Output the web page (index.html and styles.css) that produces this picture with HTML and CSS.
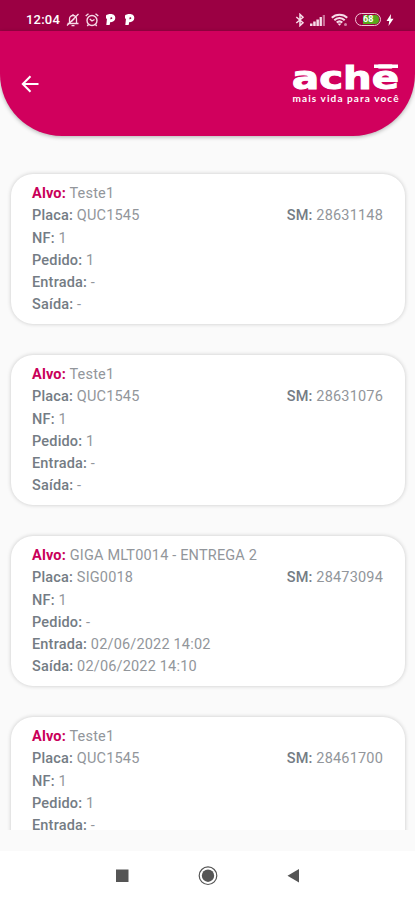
FILE: index.html
```html
<!DOCTYPE html>
<html lang="pt-BR">
<head>
    <meta charset="UTF-8">
    <meta name="viewport" content="width=device-width, initial-scale=1.0">
    <title>Aché</title>
    <link rel="stylesheet" href="styles.css">
</head>
<body>
    <div class="status-bar">
        <div class="status-left">
            <span class="clock">12:04</span>
            <svg class="icon-bell" width="14" height="14" viewBox="0 0 14 14" fill="none" stroke="currentColor" stroke-width="1.3">
                <path d="M1.500 10.500h11M3.500 10.500V6a3.500 3.500 0 0 1 7 0v4.500M5.500 12.700h3M7 1v1.500M1 12.500L12.500 1M5.500 8.500l3-3"/>
            </svg>
            <svg class="icon-alarm" width="14" height="14" viewBox="0 0 14 14" fill="none" stroke="currentColor" stroke-width="1.4">
                <circle cx="7" cy="7.500" r="5"/>
                <path d="M.7 3L3.500.8M13.300 3L10.500.8M4.800 6L7 8l2.500-1.500M3.500 11.500L2.300 13M10.500 11.500L11.700 13"/>
            </svg>
            <svg class="icon-p" width="11" height="13" viewBox="0 0 11 13">
                <path fill="currentColor" fill-rule="evenodd" d="M1 2.500C3 .6 10.300 0 10.300 5c0 3-2.600 4.400-5 4.100L4.600 12H1.300L2 5.500 1 5.800zM5.700 4.300L5.300 6.200c1.600.2 2-.6 2-1.200 0-.8-.8-1-1.600-.7z"/>
            </svg>
            <svg class="icon-p" width="11" height="13" viewBox="0 0 11 13">
                <path fill="currentColor" fill-rule="evenodd" d="M1 2.500C3 .6 10.300 0 10.300 5c0 3-2.600 4.400-5 4.100L4.600 12H1.300L2 5.500 1 5.800zM5.700 4.300L5.300 6.200c1.600.2 2-.6 2-1.200 0-.8-.8-1-1.600-.7z"/>
            </svg>
        </div>
        <div class="status-right">
            <svg width="10" height="14" viewBox="0 0 10 14" fill="none" stroke="currentColor" stroke-width="1.5">
                <path d="M1.300 4L8 9.800 5 12.600V1.400L8 4.200 1.300 10"/>
            </svg>
            <svg width="16" height="12" viewBox="0 0 16 12" fill="currentColor">
                <path d="M0 9.500h2.500V12H0zM3.200 7.500h2.500V12H3.200zM6.400 5.500h2.500V12H6.400zM9.600 3h2.300v9H9.600z"/>
                <path opacity=".5" d="M12.700 1H15v11h-2.300z"/>
            </svg>
            <svg class="icon-wifi" width="17" height="14" viewBox="0 0 17 14" fill="none" stroke="currentColor" stroke-width="2">
                <path d="M.8 4.800c4-4.200 11.400-4.200 15.400 0M3.300 7.300c3-3 7.400-3 10.400 0M5.700 9.600c1.800-1.600 3.800-1.600 5.600 0"/>
                <path fill="currentColor" stroke="none" d="M6.500 10.500h4l-2 2.200z"/>
                <circle cx="14.500" cy="11.500" r="1.500" fill="currentColor" stroke="none" opacity=".6"/>
            </svg>
            <span class="battery"><span class="battery-level">68</span></span>
            <svg class="icon-bolt" width="8" height="12" viewBox="0 0 8 12">
                <path fill="currentColor" d="M5 0L.5 7h2.700L2.500 12 7.500 4.800H4.700z"/>
            </svg>
        </div>
    </div>

    <header class="header">
        <svg class="back" width="18" height="18" viewBox="0 0 18 18" fill="none" stroke="currentColor" stroke-width="2">
            <path d="M17.500 9H2M9.500 1.300L1.800 9l7.700 7.700"/>
        </svg>
        <svg class="logo" width="108" height="44" viewBox="0 0 108 44" fill="currentColor">
            <text class="logo-name" x="0" y="27" textLength="107" lengthAdjust="spacingAndGlyphs">achē</text>
            <rect x="82" y="2.500" width="24" height="3.500"/>
            <text class="logo-tagline" x="0.500" y="40" textLength="106">mais vida para você</text>
        </svg>
    </header>

    <main class="list">
        <div class="card">
            <div class="row"><p class="alvo"><b>Alvo:</b> Teste1</p></div>
            <div class="row"><p><b>Placa:</b> QUC1545</p><p><b>SM:</b> 28631148</p></div>
            <div class="row"><p><b>NF:</b> 1</p></div>
            <div class="row"><p><b>Pedido:</b> 1</p></div>
            <div class="row"><p><b>Entrada:</b> -</p></div>
            <div class="row"><p><b>Saída:</b> -</p></div>
        </div>

        <div class="card">
            <div class="row"><p class="alvo"><b>Alvo:</b> Teste1</p></div>
            <div class="row"><p><b>Placa:</b> QUC1545</p><p><b>SM:</b> 28631076</p></div>
            <div class="row"><p><b>NF:</b> 1</p></div>
            <div class="row"><p><b>Pedido:</b> 1</p></div>
            <div class="row"><p><b>Entrada:</b> -</p></div>
            <div class="row"><p><b>Saída:</b> -</p></div>
        </div>

        <div class="card">
            <div class="row"><p class="alvo"><b>Alvo:</b> GIGA MLT0014 - ENTREGA 2</p></div>
            <div class="row"><p><b>Placa:</b> SIG0018</p><p><b>SM:</b> 28473094</p></div>
            <div class="row"><p><b>NF:</b> 1</p></div>
            <div class="row"><p><b>Pedido:</b> -</p></div>
            <div class="row"><p><b>Entrada:</b> 02/06/2022 14:02</p></div>
            <div class="row"><p><b>Saída:</b> 02/06/2022 14:10</p></div>
        </div>

        <div class="card">
            <div class="row"><p class="alvo"><b>Alvo:</b> Teste1</p></div>
            <div class="row"><p><b>Placa:</b> QUC1545</p><p><b>SM:</b> 28461700</p></div>
            <div class="row"><p><b>NF:</b> 1</p></div>
            <div class="row"><p><b>Pedido:</b> 1</p></div>
            <div class="row"><p><b>Entrada:</b> -</p></div>
        </div>
    </main>

    <nav class="nav-bar">
        <svg width="20" height="20" viewBox="0 0 20 20"><path fill="currentColor" d="M4 3.500h12.500V16H4z"/></svg>
        <svg width="20" height="20" viewBox="0 0 20 20">
            <circle cx="10" cy="9.700" r="8.800" fill="none" stroke="currentColor" stroke-width="1.200"/>
            <circle cx="10" cy="9.700" r="6.200" fill="currentColor"/>
        </svg>
        <svg width="20" height="20" viewBox="0 0 20 20"><path fill="currentColor" d="M15 3v13.600L3.500 9.800z"/></svg>
    </nav>
</body>
</html>
```

FILE: styles.css
```css
* {
    box-sizing: border-box;
}

body {
    margin: 0;
    height: 900px;
    display: flex;
    flex-direction: column;
    overflow: hidden;
    font-family: Roboto, sans-serif;
    background-color: #fafafa;
    color: #92969b;
}

svg {
    display: block;
    flex-shrink: 0;
}

/* Status bar */
.status-bar {
    height: 31px;
    flex-shrink: 0;
    display: flex;
    justify-content: space-between;
    align-items: center;
    padding: 8px 21px 0 26px;
    background-color: #9b0043;
    color: #f7dce8;
}

.status-left,
.status-right {
    display: flex;
    align-items: center;
}

.clock {
    width: 34px;
    margin-right: 6px;
    font-size: 13px;
    font-weight: 500;
    letter-spacing: 0.2px;
    color: #fff;
}

.icon-alarm {
    margin: 0 6px 0 5px;
}

.icon-p {
    margin-right: 8px;
    color: #fff;
}

.status-right {
    gap: 5px;
}

.status-right .battery {
    margin-left: 2px;
}

.battery {
    width: 26px;
    height: 13px;
    padding: 1px;
    border: 1.5px solid #f3c4d8;
    border-radius: 7px;
}

.battery-level {
    display: block;
    height: 9px;
    padding-left: 6px;
    border-radius: 4px;
    background: linear-gradient(to right, #9b0043 25%, #59a81c 25%);
    color: #fff;
    font-size: 9px;
    font-weight: 700;
    line-height: 9px;
}

.icon-bolt {
    color: #fff;
}

/* Header */
.header {
    height: 105px;
    flex-shrink: 0;
    display: flex;
    justify-content: space-between;
    align-items: center;
    padding: 0 15px 0 21px;
    background-color: #d1005d;
    color: #fff;
    border-radius: 0 0 62px 62px;
    box-shadow: 0 1px 4px rgba(0, 0, 0, 0.3);
}

.logo {
    overflow: visible;
}

.logo-name {
    font-family: "DejaVu Sans", sans-serif;
    font-weight: 700;
    font-size: 32px;
    stroke: currentColor;
    stroke-width: 1px;
}

.logo-tagline {
    font-family: Lato, sans-serif;
    font-weight: 700;
    font-size: 10px;
}

/* Cards */
.list {
    height: 694px;
    flex-shrink: 0;
    display: flex;
    flex-direction: column;
    gap: 31px;
    padding: 38px 10px 0 11px;
    overflow: hidden;
}

.card {
    height: 150px;
    flex-shrink: 0;
    padding: 9.300px 22px 0 21px;
    background-color: #fff;
    border-radius: 22px;
    box-shadow: 0 0 4px rgba(0, 0, 0, 0.2);
}

.row {
    height: 22.150px;
    display: flex;
    justify-content: space-between;
    font-size: 14.500px;
    line-height: 22px;
    letter-spacing: 0.180px;
}

.row p {
    margin: 0;
}

.row b {
    font-weight: 500;
    color: #747c84;
}

.row .alvo b {
    font-weight: 700;
    color: #c90059;
}

/* Android navigation */
.nav-bar {
    height: 49px;
    margin-top: auto;
    flex-shrink: 0;
    display: flex;
    justify-content: center;
    align-items: center;
    gap: 66px;
    background-color: #fff;
    color: #555;
}
```
